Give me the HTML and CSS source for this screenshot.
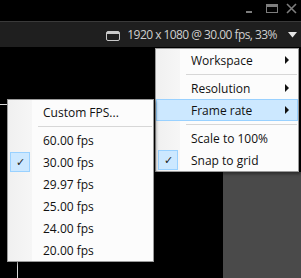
FILE: index.html
```html
<!DOCTYPE html>
<html lang="en">
<head>
  <meta charset="UTF-8">
  <title>Preview</title>
  <link rel="stylesheet" href="styles.css">
</head>
<body>
  <div class="titlebar">
    <svg class="winbtn win-min" width="10" height="10" viewBox="0 0 10 10"><rect x="1" y="7" width="6" height="2" fill="#7d7d7d"/></svg>
    <svg class="winbtn win-max" width="12" height="10" viewBox="0 0 12 10"><rect x="0.5" y="0.5" width="11" height="8" fill="none" stroke="#7d7d7d"/><rect x="0" y="0" width="12" height="3" fill="#7d7d7d"/></svg>
    <svg class="winbtn win-close" width="11" height="11" viewBox="0 0 11 11"><path d="M1 1 L10 10 M10 1 L1 10" stroke="#7d7d7d" stroke-width="1.6"/></svg>
  </div>

  <div class="toolbar">
    <svg class="screen" width="14" height="10" viewBox="0 0 14 10"><rect x="0.5" y="0.5" width="13" height="9" rx="1.5" fill="none" stroke="#c9c9c9"/><rect x="1" y="1" width="12" height="2" fill="#c9c9c9"/></svg>
    <span class="status">1920 x 1080 @ 30.00 fps, 33%</span>
    <svg class="drop" width="9" height="6" viewBox="0 0 9 6"><path d="M0 0 H9 L4.5 5.5 Z" fill="#e6e6e6"/></svg>
  </div>

  <div class="stage">
    <div class="guide guide-h"></div>
    <div class="guide guide-v"></div>
    <div class="panel"></div>

    <div class="menu main-menu">
      <div class="item"><span class="gutter"></span><span class="label">Workspace</span><span class="arrow"></span></div>
      <div class="sep"></div>
      <div class="item"><span class="gutter"></span><span class="label">Resolution</span><span class="arrow"></span></div>
      <div class="item active"><span class="gutter"></span><span class="label">Frame rate</span><span class="arrow"></span></div>
      <div class="sep"></div>
      <div class="item"><span class="gutter"></span><span class="label">Scale to 100%</span></div>
      <div class="item"><span class="gutter"><span class="check">&#10003;</span></span><span class="label">Snap to grid</span></div>
    </div>

    <div class="menu sub-menu">
      <div class="item"><span class="gutter"></span><span class="label">Custom FPS...</span></div>
      <div class="sep"></div>
      <div class="item"><span class="gutter"></span><span class="label">60.00 fps</span></div>
      <div class="item"><span class="gutter"><span class="check">&#10003;</span></span><span class="label">30.00 fps</span></div>
      <div class="item"><span class="gutter"></span><span class="label">29.97 fps</span></div>
      <div class="item"><span class="gutter"></span><span class="label">25.00 fps</span></div>
      <div class="item"><span class="gutter"></span><span class="label">24.00 fps</span></div>
      <div class="item"><span class="gutter"></span><span class="label">20.00 fps</span></div>
    </div>
  </div>
</body>
</html>
```

FILE: styles.css
```css
body {
  margin: 0;
  width: 301px;
  height: 278px;
  overflow: hidden;
  background: #000;
  font-family: 'Open Sans', 'Noto Sans', sans-serif;
}
.titlebar {
  height: 22px;
  display: flex;
  justify-content: flex-end;
  align-items: center;
  padding-right: 4px;
  border-bottom: 1px solid #3a3a3a;
  box-sizing: border-box;
}
.winbtn {
  display: block;
  margin-top: -4px;
}
.win-min {
  margin-right: 11px;
}
.win-max {
  margin-right: 8px;
}
.toolbar {
  height: 25px;
  background: #1f1f1f;
  display: flex;
  justify-content: flex-end;
  align-items: center;
  padding-right: 4px;
  color: #cfcfcf;
  font-size: 12px;
}
.screen {
  display: block;
  margin-right: 7px;
  margin-top: 2px;
}
.status {
  letter-spacing: -0.55px;
}
.drop {
  display: block;
  margin-left: 11px;
}
.stage {
  position: relative;
  height: 231px;
}
.guide {
  position: absolute;
  background: #d8d8d8;
}
.guide-h {
  left: 0;
  top: 57px;
  width: 8px;
  height: 1px;
}
.guide-v {
  left: 17px;
  top: 214px;
  width: 1px;
  height: 20px;
}
.panel {
  position: absolute;
  left: 223px;
  top: 125px;
  right: 0;
  bottom: 0;
  background: #4a4a4a;
}
.menu {
  position: absolute;
  background: linear-gradient(to right, #f0f0f0, #f6f6f6 24px, #fcfcfc 24px);
  border: 1px solid #9a9a9a;
  box-shadow: 2px 2px 3px rgba(0,0,0,0.4);
  font-size: 12px;
  color: #111;
}
.main-menu {
  left: 155px;
  top: 1px;
  width: 142px;
}
.sub-menu {
  left: 7px;
  top: 52px;
  width: 145px;
  padding-top: 1px;
}
.item {
  height: 22px;
  display: flex;
  align-items: center;
  box-sizing: border-box;
  border: 1px solid transparent;
}
.item.active {
  background: #cce8ff;
  border-color: #99d1ff;
}
.gutter {
  width: 22px;
  height: 20px;
  display: flex;
  align-items: center;
  justify-content: center;
}
.check {
  width: 20px;
  height: 20px;
  box-sizing: border-box;
  background: #cce8ff;
  border: 1px solid #99d1ff;
  font-size: 11px;
  line-height: 18px;
  text-align: center;
  color: #222;
}
.label {
  flex: 1;
  margin-left: 12px;
}
.arrow {
  width: 0;
  height: 0;
  border-top: 4px solid transparent;
  border-bottom: 4px solid transparent;
  border-left: 4px solid #111;
  margin-right: 8px;
}
.sep {
  height: 6px;
  display: flex;
  align-items: center;
  padding-left: 30px;
  padding-right: 1px;
}
.sep::after {
  content: '';
  flex: 1;
  height: 1px;
  background: #d7d7d7;
}
```
